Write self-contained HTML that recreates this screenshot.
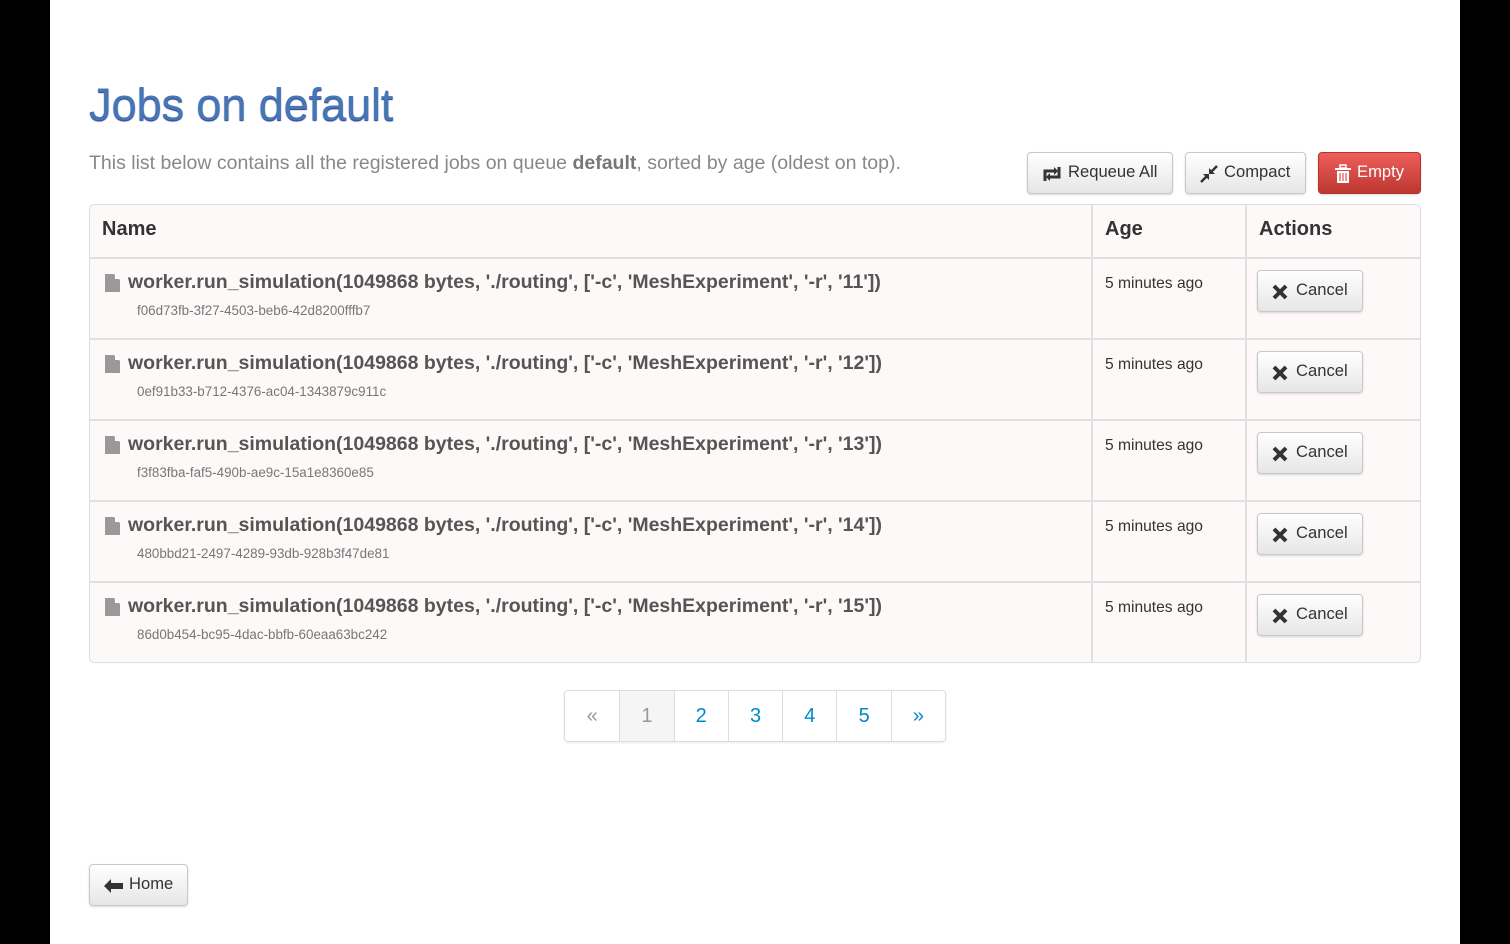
<!DOCTYPE html>
<html><head><meta charset="utf-8"><style>
*{box-sizing:border-box;margin:0;padding:0}
body{width:1510px;height:944px;background:#000;font-family:"Liberation Sans",sans-serif;overflow:hidden}
.page{position:absolute;left:50px;top:0;width:1410px;height:944px;background:#fff}
h1{position:absolute;left:89px;top:79px;font-size:45.5px;font-weight:normal;color:#4477b3;text-shadow:0 1px 1px #1f2f8a;letter-spacing:-0.3px}
p.lead{position:absolute;left:89px;top:152px;font-size:19.5px;color:#888}
p.lead b{color:#777}
.btn{position:absolute;height:42px;border:1px solid #c8c8c8;border-radius:4px;background:linear-gradient(#fff,#e6e6e6);box-shadow:0 1px 2px rgba(0,0,0,.15);font-size:16.6px;color:#333;display:flex;align-items:center;padding-left:14px;padding-bottom:2px}
.btn svg{margin-right:6px}
.red{background:linear-gradient(#ee5f5b,#bd362f);border-color:#b5332c;color:#fff}
table{position:absolute;left:89px;top:204px;width:1332px;border-collapse:separate;border-spacing:0;border:1px solid #ddd;border-radius:5px;background:#fdf9f8}
td,th{border-left:2px solid #e0e0e0;border-top:2px solid #e0e0e0;text-align:left;vertical-align:top}
tr td:first-child,tr th:first-child{border-left:none}
th{border-top:none;height:52px;font-size:20px;color:#333;padding:13px 12px}
td{height:81px;padding:12px}
.nm{font-size:19.5px;font-weight:bold;color:#555;display:flex;align-items:center;margin-left:3px}
.nm svg{margin-right:8px}
.id{font-size:13.4px;color:#777;margin:9px 0 0 35px}
.age{font-size:15.6px;color:#333;padding-top:16px}
.cb{position:relative;width:106px;height:42px;border:1px solid #c8c8c8;border-radius:4px;background:linear-gradient(#fff,#e6e6e6);box-shadow:0 1px 2px rgba(0,0,0,.15);font-size:16.6px;color:#333;display:flex;align-items:center;padding-left:14px;margin-top:-1px;margin-left:-2px;padding-bottom:3px}
.cb svg{margin-right:8px;margin-top:5px}
.pg{position:absolute;left:564px;top:690px;height:52px;display:flex;border:1px solid #ddd;border-radius:4px;box-shadow:0 1px 2px rgba(0,0,0,.08)}
.pg span{width:54.3px;height:50px;display:flex;align-items:center;justify-content:center;font-size:20px;color:#0088cc;border-left:1px solid #ddd}
.pg span:first-child{border-left:none;color:#999}
.pg span.a{background:#f5f5f5;color:#999}
</style></head><body>
<div class="page"></div>
<h1>Jobs on default</h1>
<p class="lead">This list below contains all the registered jobs on queue <b>default</b>, sorted by age (oldest on top).</p>
<div class="btn" style="left:1027px;top:152px;width:146px"><svg width="20" height="16" viewBox="0 0 20 16" style="margin-top:4px"><path d="M3 15V5h11" fill="none" stroke="#333" stroke-width="3"/><path d="M12 1l4 4-4 4z" fill="#333"/><path d="M17 1v10H6" fill="none" stroke="#333" stroke-width="3"/><path d="M8 7l-4 4 4 4z" fill="#333"/></svg>Requeue All</div>
<div class="btn" style="left:1185px;top:152px;width:121px"><svg width="18" height="18" viewBox="0 0 18 18" style="margin-top:4px"><path d="M1 17l6-6M11 7l6-6" stroke="#333" stroke-width="2.5"/><path d="M3 9h6v6zM15 9H9V3z" fill="#333"/></svg>Compact</div>
<div class="btn red" style="left:1318px;top:152px;width:103px;padding-left:16px"><svg width="16" height="20" viewBox="0 0 16 20" style="margin-top:4px"><rect x="5" y="1" width="6" height="3" fill="none" stroke="#fff" stroke-width="1.5"/><rect x="0" y="4" width="16" height="2" fill="#fff"/><path d="M2 7h12v12H2z" fill="#fff"/><path d="M5 9v8M8 9v8M11 9v8" stroke="#e0504a" stroke-width="1.2"/></svg>Empty</div>
<table>
<tr><th style="width:1001px">Name</th><th style="width:154px">Age</th><th>Actions</th></tr>
<tr><td><div class="nm"><svg width="15" height="18" viewBox="0 0 15 18"><path d="M0 0h9l6 6v12H0z" fill="#999"/><path d="M10 0l5 5h-5z" fill="#fff"/></svg>worker.run_simulation(1049868 bytes, './routing', ['-c', 'MeshExperiment', '-r', '11'])</div><div class="id">f06d73fb-3f27-4503-beb6-42d8200fffb7</div></td><td class="age">5 minutes ago</td><td><div class="cb"><svg width="16" height="16" viewBox="0 0 16 16"><path d="M2 2l12 12M14 2L2 14" stroke="#333" stroke-width="4"/></svg>Cancel</div></td></tr>
<tr><td><div class="nm"><svg width="15" height="18" viewBox="0 0 15 18"><path d="M0 0h9l6 6v12H0z" fill="#999"/><path d="M10 0l5 5h-5z" fill="#fff"/></svg>worker.run_simulation(1049868 bytes, './routing', ['-c', 'MeshExperiment', '-r', '12'])</div><div class="id">0ef91b33-b712-4376-ac04-1343879c911c</div></td><td class="age">5 minutes ago</td><td><div class="cb"><svg width="16" height="16" viewBox="0 0 16 16"><path d="M2 2l12 12M14 2L2 14" stroke="#333" stroke-width="4"/></svg>Cancel</div></td></tr>
<tr><td><div class="nm"><svg width="15" height="18" viewBox="0 0 15 18"><path d="M0 0h9l6 6v12H0z" fill="#999"/><path d="M10 0l5 5h-5z" fill="#fff"/></svg>worker.run_simulation(1049868 bytes, './routing', ['-c', 'MeshExperiment', '-r', '13'])</div><div class="id">f3f83fba-faf5-490b-ae9c-15a1e8360e85</div></td><td class="age">5 minutes ago</td><td><div class="cb"><svg width="16" height="16" viewBox="0 0 16 16"><path d="M2 2l12 12M14 2L2 14" stroke="#333" stroke-width="4"/></svg>Cancel</div></td></tr>
<tr><td><div class="nm"><svg width="15" height="18" viewBox="0 0 15 18"><path d="M0 0h9l6 6v12H0z" fill="#999"/><path d="M10 0l5 5h-5z" fill="#fff"/></svg>worker.run_simulation(1049868 bytes, './routing', ['-c', 'MeshExperiment', '-r', '14'])</div><div class="id">480bbd21-2497-4289-93db-928b3f47de81</div></td><td class="age">5 minutes ago</td><td><div class="cb"><svg width="16" height="16" viewBox="0 0 16 16"><path d="M2 2l12 12M14 2L2 14" stroke="#333" stroke-width="4"/></svg>Cancel</div></td></tr>
<tr><td><div class="nm"><svg width="15" height="18" viewBox="0 0 15 18"><path d="M0 0h9l6 6v12H0z" fill="#999"/><path d="M10 0l5 5h-5z" fill="#fff"/></svg>worker.run_simulation(1049868 bytes, './routing', ['-c', 'MeshExperiment', '-r', '15'])</div><div class="id">86d0b454-bc95-4dac-bbfb-60eaa63bc242</div></td><td class="age">5 minutes ago</td><td><div class="cb"><svg width="16" height="16" viewBox="0 0 16 16"><path d="M2 2l12 12M14 2L2 14" stroke="#333" stroke-width="4"/></svg>Cancel</div></td></tr>
</table>
<div class="pg"><span>«</span><span class="a">1</span><span>2</span><span>3</span><span>4</span><span>5</span><span>»</span></div>
<div class="btn" style="left:89px;top:864px;width:99px"><svg width="19" height="14" viewBox="0 0 19 14" style="margin-top:4px"><path d="M0 7l7-7v4h12v6H7v4z" fill="#333"/></svg>Home</div>
</body></html>
